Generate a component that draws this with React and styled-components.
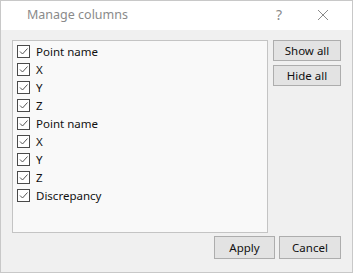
import React from "react";
import styled, { createGlobalStyle } from "styled-components";

const Global = createGlobalStyle`
  html, body { margin: 0; padding: 0; background: #ffffff; }
  body { font-family: "Segoe UI", "Noto Sans", "Open Sans", sans-serif; }
`;

const Window = styled.div`
  width: 353px;
  height: 273px;
  box-sizing: border-box;
  border: 1px solid #c8c8c8;
  display: flex;
  flex-direction: column;
  background: #f0f0f0;
`;

const TitleBar = styled.div`
  height: 29px;
  background: #ffffff;
  display: flex;
  align-items: center;
  padding-left: 26px;
  padding-right: 14px;
  color: #8a8a8a;
  font-size: 12.5px;
  padding-bottom: 2px;
  box-sizing: border-box;
`;

const Title = styled.div`
  flex: 1;
`;

const TitleIcon = styled.div`
  width: 30px;
  display: flex;
  justify-content: center;
  margin-left: ${(p) => p.gap || 0}px;
  color: #8a8a8a;
  font-size: 14px;
`;

const Body = styled.div`
  flex: 1;
  display: flex;
  flex-direction: column;
  padding: 10px 11px 10px 11px;
  gap: 3px;
`;

const Main = styled.div`
  display: flex;
  gap: 5px;
`;

const List = styled.div`
  width: 257px;
  height: 193px;
  box-sizing: border-box;
  background: #f9f9f9;
  border: 1px solid #c4c4c4;
  padding: 1px 4px;
  display: flex;
  flex-direction: column;
`;

const Row = styled.div`
  height: 18px;
  display: flex;
  align-items: center;
  gap: 6px;
  font-size: 11.5px;
  color: #111;
`;

const Box = styled.div`
  width: 13px;
  height: 13px;
  box-sizing: border-box;
  border: 1px solid #4a4a4a;
  background: #fff;
  display: flex;
  align-items: center;
  justify-content: center;
`;

const Side = styled.div`
  display: flex;
  flex-direction: column;
  gap: 4px;
`;

const Button = styled.button`
  width: ${(p) => p.w || 67}px;
  height: ${(p) => p.h || 21}px;
  box-sizing: border-box;
  border: 1px solid #adadad;
  background: #e3e3e3;
  font-family: "Segoe UI", "Noto Sans", "Open Sans", sans-serif;
  font-size: 11.5px;
  color: #111;
  padding: 0;
  display: flex;
  align-items: center;
  justify-content: center;
`;

const Footer = styled.div`
  display: flex;
  justify-content: flex-end;
  gap: 4px;
`;

const Check = () => (
  <svg width="11" height="11" viewBox="0 0 11 11">
    <path d="M2 5.5 L4.5 8 L9.5 2.5" fill="none" stroke="#555" strokeWidth="1" />
  </svg>
);

const items = ["Point name", "X", "Y", "Z", "Point name", "X", "Y", "Z", "Discrepancy"];

export default function App() {
  return (
    <>
      <Global />
      <Window>
        <TitleBar>
          <Title>Manage columns</Title>
          <TitleIcon>?</TitleIcon>
          <TitleIcon gap={14}>
            <svg width="12" height="12" viewBox="0 0 12 12">
              <path d="M1 1 L11 11 M11 1 L1 11" stroke="#8a8a8a" strokeWidth="1" />
            </svg>
          </TitleIcon>
        </TitleBar>
        <Body>
          <Main>
            <List>
              {items.map((t, i) => (
                <Row key={i}>
                  <Box>
                    <Check />
                  </Box>
                  {t}
                </Row>
              ))}
            </List>
            <Side>
              <Button w={68} h={21}>Show all</Button>
              <Button w={68} h={21}>Hide all</Button>
            </Side>
          </Main>
          <Footer>
            <Button w={61} h={23}>Apply</Button>
            <Button w={62} h={23}>Cancel</Button>
          </Footer>
        </Body>
      </Window>
    </>
  );
}
